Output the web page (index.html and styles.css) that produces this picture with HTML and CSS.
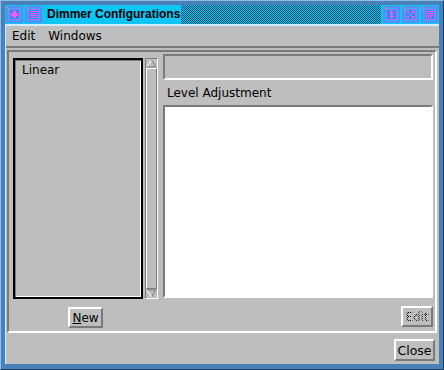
FILE: index.html
```html
<!DOCTYPE html>
<html>
<head>
  <title>Dimmer Configurations</title>
  <link rel="stylesheet" href="styles.css">
</head>
<body>
  <div class="window">
    <div class="titlebar">
      <span class="tbtn">
        <svg width="17" height="17" viewBox="0 0 17 17"><rect x="0.5" y="0.5" width="16" height="16" fill="#8a64f0"/><rect x="1.5" y="1.5" width="14" height="14" fill="#28b0ff"/><rect x="3.5" y="3.5" width="10" height="10" fill="#2a8cf0" stroke="#b070f0"/><path d="M1 1l2 2" stroke="#e0a040"/><path d="M7 5h3v2h2v3h-2v2h-3v-2h-2v-3h2z" fill="#ff58f0"/></svg>
      </span>
      <span class="tbtn">
        <svg width="17" height="17" viewBox="0 0 17 17"><rect x="0.5" y="0.5" width="16" height="16" fill="#8a64f0"/><rect x="1.5" y="1.5" width="14" height="14" fill="#28b0ff"/><rect x="3.5" y="3.5" width="10" height="10" fill="#2a8cf0" stroke="#b070f0"/><path d="M1 1l2 2" stroke="#e0a040"/><path d="M5 5.5h7M5 7.5h7M5 9.5h7M5 11.5h7" stroke="#ff58f0"/></svg>
      </span>
      <span class="title">Dimmer Configurations</span>
      <span class="hatch"></span>
      <span class="tbtn">
        <svg width="17" height="17" viewBox="0 0 17 17"><rect x="0.5" y="0.5" width="16" height="16" fill="#8a64f0"/><rect x="1.5" y="1.5" width="14" height="14" fill="#28b0ff"/><rect x="3.5" y="3.5" width="10" height="10" fill="#2a8cf0" stroke="#b070f0"/><path d="M1 1l2 2" stroke="#e0a040"/><path d="M8.5 4.5l2.5 2.5h-1.5v3h1.5l-2.5 2.5l-2.5-2.5h1.5v-3h-1.5z" fill="#ff58f0"/></svg>
      </span>
      <span class="tbtn">
        <svg width="17" height="17" viewBox="0 0 17 17"><rect x="0.5" y="0.5" width="16" height="16" fill="#8a64f0"/><rect x="1.5" y="1.5" width="14" height="14" fill="#28b0ff"/><rect x="3.5" y="3.5" width="10" height="10" fill="#2a8cf0" stroke="#b070f0"/><path d="M1 1l2 2" stroke="#e0a040"/><path d="M5 5h2v2h-2zM10 5h2v2h-2zM7.5 7.5h2v2h-2zM5 10h2v2h-2zM10 10h2v2h-2z" fill="#ff58f0"/></svg>
      </span>
      <span class="tbtn">
        <svg width="17" height="17" viewBox="0 0 17 17"><rect x="0.5" y="0.5" width="16" height="16" fill="#8a64f0"/><rect x="1.5" y="1.5" width="14" height="14" fill="#28b0ff"/><rect x="3.5" y="3.5" width="10" height="10" fill="#2a8cf0" stroke="#b070f0"/><path d="M1 1l2 2" stroke="#e0a040"/><path d="M5.5 12.5v-7h7M7.5 12.5v-5h5M9.5 12.5v-3h3" stroke="#ff58f0" fill="none"/></svg>
      </span>
    </div>
    <div class="client">
      <div class="menubar">
        <span class="menu">Edit</span>
        <span class="menu">Windows</span>
      </div>
      <div class="panel">
        <div class="left">
          <div class="listrow">
            <div class="list">
              <div class="item">Linear</div>
            </div>
            <div class="scroll">
              <svg class="arrow" width="11" height="9" viewBox="0 0 11 9"><path d="M5.5 1L10 8H1z" fill="#bebebe"/><path d="M1 8L5.5 1" stroke="#fff"/><path d="M5.5 1L10 8H1" stroke="#7a7a7a" fill="none"/></svg>
              <div class="slider"></div>
              <svg class="arrow" width="11" height="9" viewBox="0 0 11 9"><path d="M5.5 8L10 1H1z" fill="#bebebe"/><path d="M1 1H10L5.5 8" stroke="#7a7a7a" fill="none"/><path d="M1 1L5.5 8" stroke="#fff"/></svg>
            </div>
          </div>
          <button class="btn new"><u>N</u>ew</button>
        </div>
        <div class="right">
          <div class="field"></div>
          <div class="label">Level Adjustment</div>
          <div class="canvas"></div>
          <button class="btn edit"><span class="stipple">Edit</span></button>
        </div>
      </div>
      <div class="footer">
        <button class="btn close">Close</button>
      </div>
    </div>
  </div>
</body>
</html>
```

FILE: styles.css
```css
body { margin: 0; font-family: "DejaVu Sans", sans-serif; font-size: 12px; color: #000; }

.window {
  width: 444px;
  height: 370px;
  box-sizing: border-box;
  background: #4a80b8;
  border-top: 1px solid #8cbce8;
  border-left: 1px solid #8cbce8;
  border-right: 1px solid #1c3f60;
  border-bottom: 1px solid #1c3f60;
  padding: 4px 4px 5px 4px;
  display: flex;
  flex-direction: column;
}

.titlebar {
  height: 19px;
  display: flex;
  align-items: center;
  background: #10c4f4;
  padding: 0 1px;
}
.tbtn { display: flex; width: 17px; height: 17px; margin-right: 2px; }
.tbtn:nth-child(2) { margin-right: 3px; }
.title {
  font-family: "Liberation Sans", sans-serif;
  font-weight: bold;
  font-size: 12px;
  padding: 0 1px 0 2px;
  line-height: 19px;
}
.hatch {
  flex: 1;
  align-self: stretch;
  margin-right: 2px;
  background: repeating-conic-gradient(#10c4f4 0 25%, #0a4a64 0 50%) 0 0 / 2px 2px;
}
.titlebar .tbtn:last-child { margin-right: 0; }

.client {
  flex: 1;
  background: #bebebe;
  border-top: 2px solid #d0ecfa;
  border-left: 1px solid #d0ecfa;
  display: flex;
  flex-direction: column;
}

.menubar {
  height: 20px;
  border-bottom: 2px solid #7a7a7a;
  display: flex;
  align-items: center;
  padding-left: 6px;
}
.menu { margin-right: 13px; }

.panel {
  height: 283px;
  box-sizing: border-box;
  margin: 2px 2px 0 1px;
  border-top: 2px solid #7a7a7a;
  border-left: 2px solid #7a7a7a;
  border-right: 2px solid #fff;
  border-bottom: 2px solid #fff;
  display: flex;
  padding: 2px 2px 0 4px;
}

.left { width: 145px; display: flex; flex-direction: column; padding-top: 4px; }
.listrow { display: flex; height: 241px; }
.list {
  width: 130px;
  box-sizing: border-box;
  border: 2px solid #000;
  box-shadow: inset 1px 1px #7a7a7a, inset -1px -1px #fff;
  padding: 3px 0 0 7px;
}
.item { line-height: 14px; }

.scroll {
  width: 13px;
  margin-left: 2px;
  box-sizing: border-box;
  border-top: 1px solid #7a7a7a;
  border-left: 1px solid #7a7a7a;
  border-right: 1px solid #fff;
  border-bottom: 1px solid #fff;
  display: flex;
  flex-direction: column;
  align-items: center;
}
.arrow { display: block; margin: 0; }
.slider {
  flex: 1;
  width: 11px;
  box-sizing: border-box;
  border-top: 1px solid #fff;
  border-left: 1px solid #fff;
  border-right: 1px solid #7a7a7a;
  border-bottom: 1px solid #7a7a7a;
}

.right { flex: 1; margin-left: 5px; display: flex; flex-direction: column; }
.field {
  height: 26px;
  box-sizing: border-box;
  border-top: 2px solid #7a7a7a;
  border-left: 2px solid #7a7a7a;
  border-right: 2px solid #fff;
  border-bottom: 2px solid #fff;
}
.label { height: 25px; line-height: 26px; padding-left: 4px; }
.canvas {
  height: 193px;
  box-sizing: border-box;
  background: #fff;
  border-top: 2px solid #7a7a7a;
  border-left: 2px solid #7a7a7a;
  border-right: 2px solid #fff;
  border-bottom: 2px solid #fff;
}

.btn {
  font-family: "DejaVu Sans", sans-serif;
  font-size: 12px;
  background: #bebebe;
  color: #000;
  height: 21px;
  box-sizing: border-box;
  border-top: 2px solid #fff;
  border-left: 2px solid #fff;
  border-right: 2px solid #7a7a7a;
  border-bottom: 2px solid #7a7a7a;
  padding: 0;
  margin: 0;
}
.new { align-self: center; margin-top: 8px; width: 35px; }
.edit { align-self: flex-end; margin-top: 8px; width: 32px; }
.stipple {
  color: transparent;
  background: repeating-conic-gradient(#000 0 25%, transparent 0 50%) 0 0 / 2px 2px;
  -webkit-background-clip: text;
  background-clip: text;
}

.footer { flex: 1; display: flex; justify-content: flex-end; align-items: flex-start; padding: 6px 4px 0 0; }
.close { height: 22px; width: 41px; font-size: 12.5px; }
```
